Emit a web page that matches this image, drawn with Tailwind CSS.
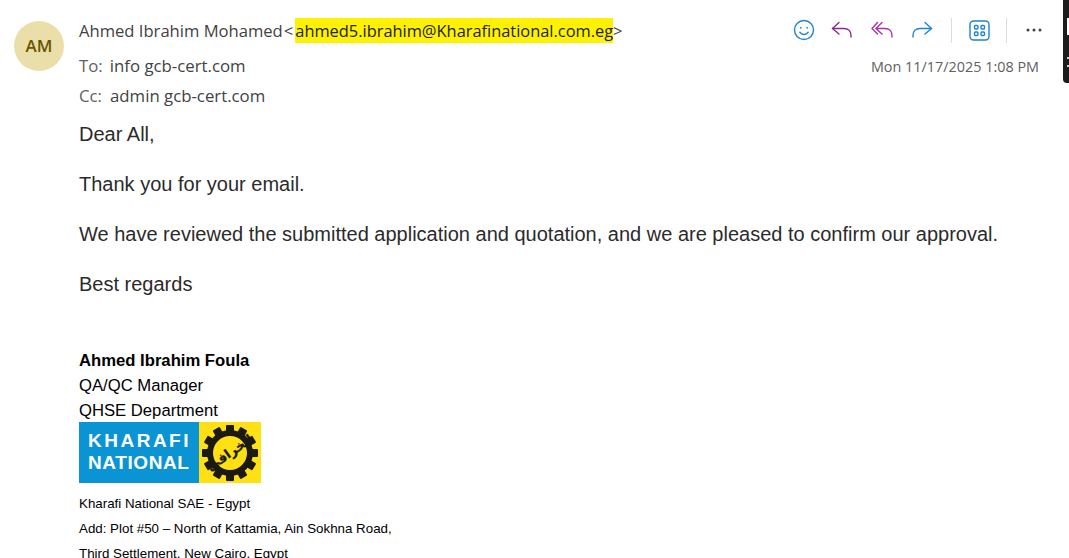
<!DOCTYPE html>
<html lang="en">
<head>
    <meta charset="UTF-8">
    <title>Email</title>
    <script src="https://cdn.jsdelivr.net/npm/@tailwindcss/browser@4"></script>
</head>
<body class="bg-white h-[558px] w-[1069px] overflow-hidden relative font-['Liberation_Sans',sans-serif]">
    <!-- dark strip at the right edge -->
    <div class="absolute right-0 top-0 w-[6px] h-[83px] bg-[#1c1c1c] rounded-bl-[4px]">
        <div class="absolute right-0 top-[18px] w-[2px] h-[17px] bg-white"></div>
        <div class="absolute right-0 top-[57px] w-[2px] h-[2px] bg-[#d0d0d0]"></div>
        <div class="absolute right-0 top-[65px] w-[2px] h-[2px] bg-[#d0d0d0]"></div>
    </div>

    <div class="flex pl-[14px] pr-[30px]">
        <div class="pt-[21px] w-[65px] shrink-0">
            <div class="w-[50px] h-[50px] rounded-full bg-[#eadfa9] text-[#6b5500] flex items-center justify-center text-[17px] font-semibold font-['Open_Sans',sans-serif]">AM</div>
        </div>

        <div class="flex-1 min-w-0">
            <!-- header -->
            <div class="font-['Open_Sans',sans-serif] text-[#424242]">
                <div class="flex justify-between items-start h-[51px] pt-[15px]">
                    <div class="flex items-center text-[16.6px] leading-[25px] h-[30px]">
                        <span>Ahmed Ibrahim Mohamed</span><span class="ml-[1px] mr-[2px]">&lt;</span><span class="bg-[#fff200] text-[#222] text-[16.4px]">ahmed5.ibrahim@Kharafinational.com.eg</span><span>&gt;</span>
                    </div>
                    <div class="flex items-center h-[30px] -mr-[3px]">
                        <svg class="w-[22px] h-[22px] text-[#1d83d4]" viewBox="0 0 22 22" fill="none" stroke="currentColor" stroke-width="1.4" stroke-linecap="round"><circle cx="11" cy="11" r="9.5"/><circle cx="7.8" cy="8.8" r="0.9" fill="currentColor" stroke="none"/><circle cx="14.2" cy="8.8" r="0.9" fill="currentColor" stroke="none"/><path d="M6.8 13.2c2.2 3 6.2 3 8.400 0"/></svg>
                        <svg class="w-[22px] h-[20px] ml-[16px] text-[#8a2a8e]" viewBox="0 0 22 20" fill="none" stroke="currentColor" stroke-width="1.4" stroke-linecap="round" stroke-linejoin="round"><path d="M8 2.500 1.500 8.500 8 14"/><path d="M1.500 8.500H13c4 0 7 2.500 7 7v1.500"/></svg>
                        <svg class="w-[22px] h-[20px] ml-[18px] text-[#a334a8]" viewBox="0 0 22 20" fill="none" stroke="currentColor" stroke-width="1.4" stroke-linecap="round" stroke-linejoin="round"><path d="M6.500 2.500 1 8.500 6.500 14"/><path d="M11 2.500 5 8.500 11 14"/><path d="M5 8.500h9c4 0 7 2.500 7 7v1.500"/></svg>
                        <svg class="w-[22px] h-[20px] ml-[18px] text-[#1d83d4]" viewBox="0 0 22 20" fill="none" stroke="currentColor" stroke-width="1.4" stroke-linecap="round" stroke-linejoin="round"><path d="M14 2.500l6.500 6-6.500 5.500"/><path d="M20.500 8.500H9c-4 0-7 2.500-7 7v1.500"/></svg>
                        <div class="w-px h-[25px] bg-[#dcdcdc] ml-[18px]"></div>
                        <svg class="w-[21px] h-[21px] ml-[17px] text-[#1d83d4]" viewBox="0 0 21 21" fill="none" stroke="currentColor" stroke-width="1.4"><rect x="1" y="1" width="19" height="19" rx="3.500"/><rect x="5.500" y="5.500" width="3.500" height="3.500" rx="1"/><rect x="12" y="5.500" width="3.500" height="3.500" rx="1"/><rect x="5.500" y="12" width="3.500" height="3.500" rx="1"/><rect x="12" y="12" width="3.500" height="3.500" rx="1"/></svg>
                        <div class="w-px h-[25px] bg-[#dcdcdc] ml-[16px]"></div>
                        <svg class="w-[16px] h-[4px] ml-[19px] text-[#424242]" viewBox="0 0 16 4" fill="currentColor"><circle cx="2" cy="2" r="1.500"/><circle cx="8" cy="2" r="1.500"/><circle cx="14" cy="2" r="1.500"/></svg>
                    </div>
                </div>
                <div class="flex justify-between items-center h-[30px] text-[16.8px]">
                    <div><span class="text-[#616161]">To:</span><span class="ml-[7px]">info gcb-cert.com</span></div>
                    <div class="text-[14.4px] text-[#616161] pt-px">Mon 11/17/2025 1:08 PM</div>
                </div>
                <div class="flex items-center h-[30px] text-[16.8px]">
                    <span class="text-[#616161]">Cc:</span><span class="ml-[8px]">admin gcb-cert.com</span>
                </div>
            </div>

            <!-- message body -->
            <div class="text-[20px] leading-[26px] text-[#2b2b2b] pt-[10px] flex flex-col gap-[24px]">
                <p>Dear All,</p>
                <p>Thank you for your email.</p>
                <p>We have reviewed the submitted application and quotation, and we are pleased to confirm our approval.</p>
                <p>Best regards</p>
            </div>

            <!-- signature -->
            <div class="text-black text-[16.67px] leading-[25px] pt-[51px]">
                <p class="font-bold">Ahmed Ibrahim Foula</p>
                <p>QA/QC Manager</p>
                <p>QHSE Department</p>
                <div class="flex w-[182px] h-[61px] -mt-px">
                    <div class="w-[120px] bg-[#0a94d3] text-white font-bold flex flex-col justify-center pl-[9px] text-[19px] leading-[22px] pb-px">
                        <span class="tracking-[2.5px]">KHARAFI</span>
                        <span class="tracking-[0.6px]">NATIONAL</span>
                    </div>
                    <div class="flex-1 bg-[#ffe113] flex items-center justify-center">
                        <svg class="w-[56px] h-[56px]" viewBox="0 0 56 56">
                            <g fill="#1a1a12">
                                <circle cx="28" cy="28" r="23"/>
                                <rect x="24" y="0" width="8" height="8" rx="1"/>
                                <rect x="24" y="0" width="8" height="8" rx="1" transform="rotate(30 28 28)"/>
                                <rect x="24" y="0" width="8" height="8" rx="1" transform="rotate(60 28 28)"/>
                                <rect x="24" y="0" width="8" height="8" rx="1" transform="rotate(90 28 28)"/>
                                <rect x="24" y="0" width="8" height="8" rx="1" transform="rotate(120 28 28)"/>
                                <rect x="24" y="0" width="8" height="8" rx="1" transform="rotate(150 28 28)"/>
                                <rect x="24" y="0" width="8" height="8" rx="1" transform="rotate(180 28 28)"/>
                                <rect x="24" y="0" width="8" height="8" rx="1" transform="rotate(210 28 28)"/>
                                <rect x="24" y="0" width="8" height="8" rx="1" transform="rotate(240 28 28)"/>
                                <rect x="24" y="0" width="8" height="8" rx="1" transform="rotate(270 28 28)"/>
                                <rect x="24" y="0" width="8" height="8" rx="1" transform="rotate(300 28 28)"/>
                                <rect x="24" y="0" width="8" height="8" rx="1" transform="rotate(330 28 28)"/>
                            </g>
                            <circle cx="28" cy="28" r="17" fill="#ffe113"/>
                            <text x="28" y="32" text-anchor="middle" font-size="13" font-weight="700" fill="#1a1a12" stroke="#1a1a12" stroke-width="0.3" font-family="DejaVu Sans" transform="rotate(-35 28 28)" direction="rtl">الخرافي</text>
                        </svg>
                    </div>
                </div>
                <div class="text-[13.33px] leading-[25px] pt-[8px]">
                    <p>Kharafi National SAE - Egypt</p>
                    <p>Add: Plot #50 – North of Kattamia, Ain Sokhna Road,</p>
                    <p>Third Settlement, New Cairo, Egypt</p>
                </div>
            </div>
        </div>
    </div>
</body>
</html>
